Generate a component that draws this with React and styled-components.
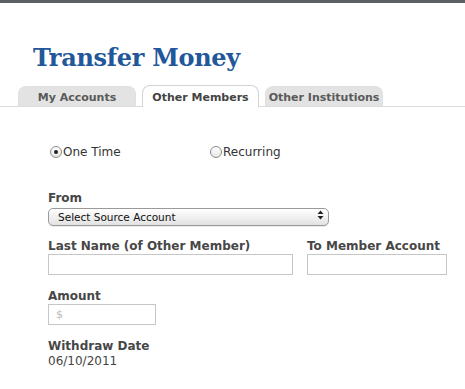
import React from 'react';
import styled, { createGlobalStyle } from 'styled-components';

const GlobalStyle = createGlobalStyle`
    html, body {
        margin: 0;
        padding: 0;
        background: #fff;
    }
    body {
        font-family: "DejaVu Sans", Verdana, sans-serif;
        color: #444;
    }
`;

const TopBar = styled.div`
    height: 3px;
    background: #5c6062;
`;

const Page = styled.div`
    width: 465px;
    min-height: 386px;
    overflow: hidden;
`;

const Title = styled.h1`
    margin: 38px 0 0 33px;
    font-family: "DejaVu Serif", Georgia, serif;
    font-size: 24px;
    line-height: 34px;
    font-weight: bold;
    color: #22579a;
    letter-spacing: -0.3px;
`;

const TabBar = styled.div`
    display: flex;
    align-items: flex-end;
    gap: 6px;
    margin-top: 10px;
    padding-left: 18px;
    border-bottom: 1px solid #dcdcdc;
    height: 21px;
`;

const Tab = styled.div`
    box-sizing: border-box;
    width: ${props => props.width}px;
    height: ${props => (props.active ? 22 : 20)}px;
    margin-bottom: ${props => (props.active ? -1 : 0)}px;
    display: flex;
    align-items: center;
    justify-content: center;
    font-size: 11px;
    font-weight: bold;
    color: ${props => (props.active ? '#444' : '#5a5a5a')};
    background: ${props => (props.active ? '#fff' : '#e3e3e3')};
    border: 1px solid ${props => (props.active ? '#d4d4d4' : '#e0e0e0')};
    border-bottom: none;
    border-radius: 8px 8px 0 0;
    padding-top: 2px;
`;

const Form = styled.div`
    padding: 38px 0 0 48px;
`;

const RadioRow = styled.div`
    display: flex;
    height: 14px;
    align-items: center;
    margin-bottom: 31px;
    padding-left: 2px;
`;

const RadioOption = styled.label`
    display: flex;
    align-items: center;
    width: 160px;
    font-size: 12px;
    color: #333;
`;

const RadioCircle = styled.span`
    box-sizing: border-box;
    width: 12px;
    height: 12px;
    border-radius: 50%;
    border: 1px solid #8a8a8a;
    background: linear-gradient(#fff, #e6e6e6);
    display: flex;
    align-items: center;
    justify-content: center;
    margin-right: 1px;
    &::after {
        content: '';
        display: ${props => (props.checked ? 'block' : 'none')};
        width: 4px;
        height: 4px;
        border-radius: 50%;
        background: #222;
    }
`;

const Row = styled.div`
    display: flex;
    gap: 14px;
`;

const Field = styled.div`
    margin-bottom: ${props => props.space || 11}px;
`;

const Label = styled.div`
    font-size: 12px;
    line-height: 15px;
    font-weight: bold;
    color: #474747;
    padding-top: ${props => (props.tight ? 1 : 3)}px;
`;

const Value = styled.div`
    font-size: 12px;
    line-height: 15px;
    color: #444;
`;

const TextInput = styled.input`
    box-sizing: border-box;
    display: block;
    width: ${props => props.width}px;
    height: 21px;
    margin: 0;
    border: 1px solid #c6c6c6;
    background: #fff;
    padding: 0 7px;
    font-family: "DejaVu Sans", Verdana, sans-serif;
    font-size: 11px;
    outline: none;
    &::placeholder {
        color: #bbb;
    }
`;

const SelectWrap = styled.div`
    position: relative;
    width: 281px;
    height: 18px;
`;

const Select = styled.select`
    appearance: none;
    box-sizing: border-box;
    width: 100%;
    height: 18px;
    margin: 0;
    padding: 0 0 0 9px;
    border: 1px solid #9a9a9a;
    border-radius: 5px;
    background: linear-gradient(#ffffff, #f1f1f1 50%, #e2e2e2);
    font-family: "DejaVu Sans", Verdana, sans-serif;
    font-size: 10.5px;
    color: #111;
    box-shadow: 0 1px 0 rgba(0, 0, 0, 0.08);
`;

const Arrows = styled.svg`
    position: absolute;
    right: 5px;
    top: 4px;
    pointer-events: none;
`;

export default function App() {
    return (
        <>
            <GlobalStyle />
            <Page>
                <TopBar />
                <Title>Transfer Money</Title>
                <TabBar>
                    <Tab width={118}>My Accounts</Tab>
                    <Tab width={117} active>Other Members</Tab>
                    <Tab width={118}>Other Institutions</Tab>
                </TabBar>
                <Form>
                    <RadioRow>
                        <RadioOption>
                            <RadioCircle checked />
                            One Time
                        </RadioOption>
                        <RadioOption>
                            <RadioCircle />
                            Recurring
                        </RadioOption>
                    </RadioRow>
                    <Field space={12}>
                        <Label tight>From</Label>
                        <SelectWrap>
                            <Select defaultValue="">
                                <option value="">Select Source Account</option>
                            </Select>
                            <Arrows width="7" height="10" viewBox="0 0 7 10">
                                <path d="M3.5 0.5 L6.5 4 L0.5 4 Z" fill="#222" />
                                <path d="M3.5 9.5 L6.5 6 L0.5 6 Z" fill="#222" />
                            </Arrows>
                        </SelectWrap>
                    </Field>
                    <Row>
                        <Field>
                            <Label>Last Name (of Other Member)</Label>
                            <TextInput width={245} />
                        </Field>
                        <Field>
                            <Label>To Member Account</Label>
                            <TextInput width={140} />
                        </Field>
                    </Row>
                    <Field>
                        <Label>Amount</Label>
                        <TextInput width={108} placeholder="$" />
                    </Field>
                    <Field>
                        <Label>Withdraw Date</Label>
                        <Value>06/10/2011</Value>
                    </Field>
                </Form>
            </Page>
        </>
    );
}
